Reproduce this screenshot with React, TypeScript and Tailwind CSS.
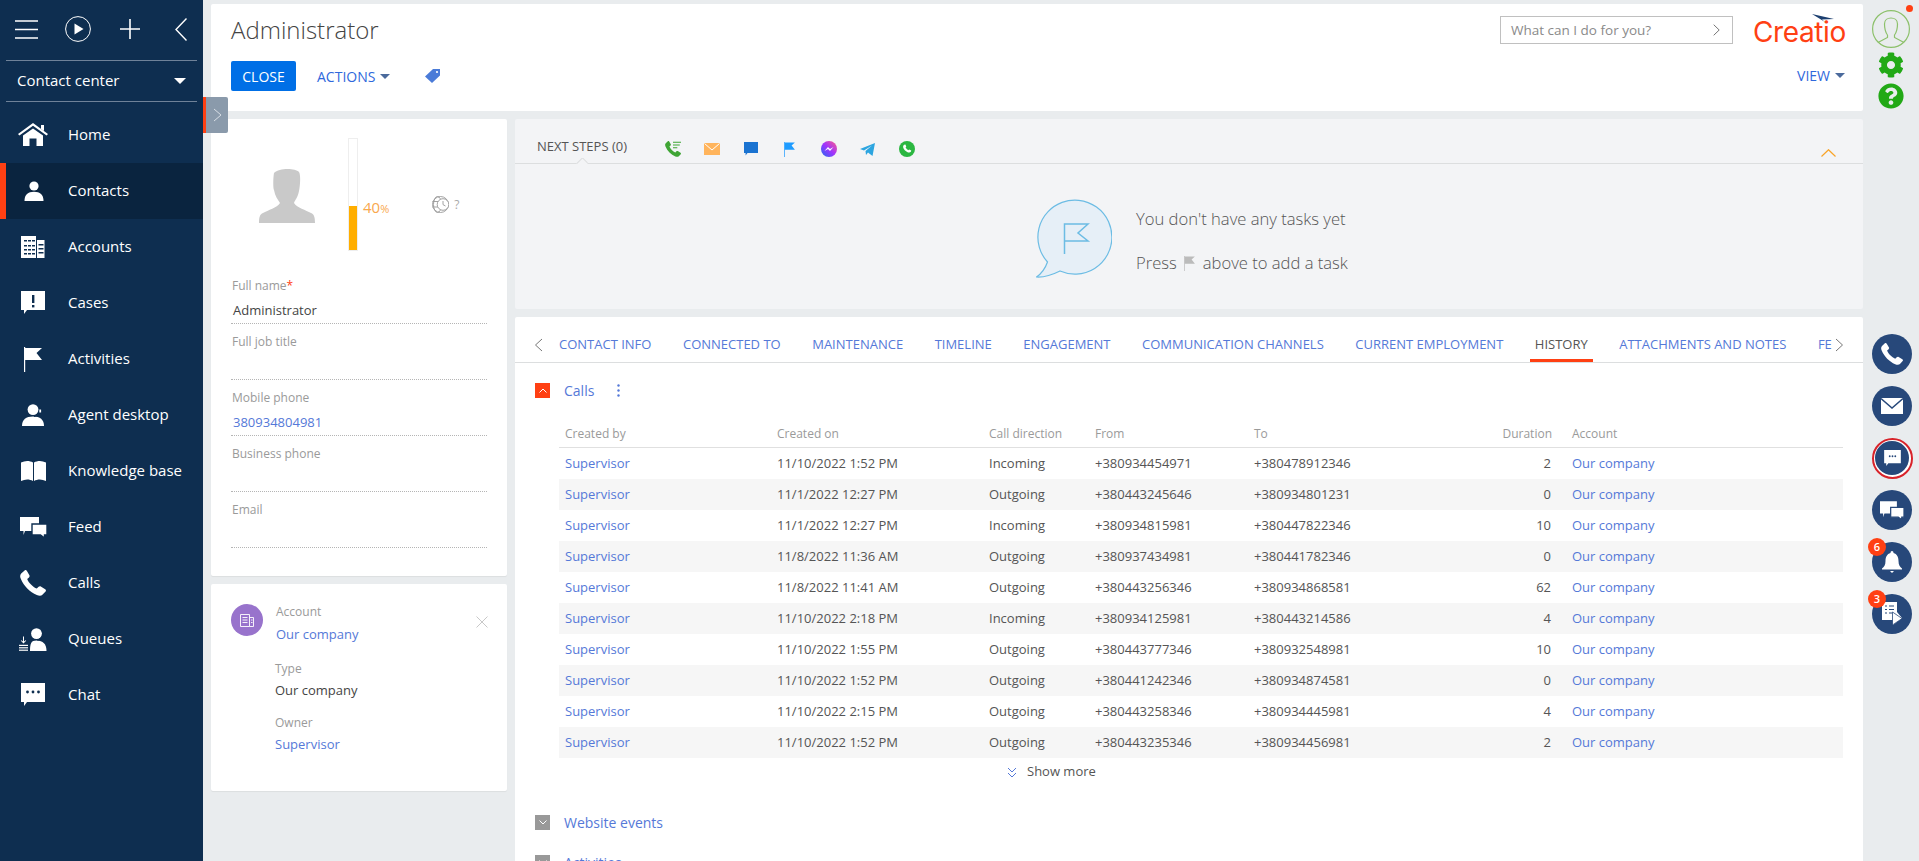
import React from 'react';
import { FaCog, FaQuestionCircle } from 'react-icons/fa';

const BLUE = 'text-[#5579d8]';

function Home() { return <svg width="30" height="24" viewBox="0 0 30 24" fill="#fff"><path d="M15 0 L30 11 L28.6 12.6 L15 2.8 L1.4 12.6 L0 11 Z"/><path d="M23 2 h3 v6 l-3 -2 z"/><path d="M5 12.5 L15 5.5 L25 12.5 V23 H18.5 V15.5 H11.5 V23 H5 Z"/></svg>; }
function Person() { return <svg width="20" height="20" viewBox="0 0 20 20" fill="#fff"><circle cx="10" cy="5" r="4.6"/><path d="M0.5 20 C0.5 13.5 4 10.8 10 10.8 C16 10.8 19.5 13.5 19.5 20 Z"/></svg>; }
function Accounts() { return <svg width="24" height="22" viewBox="0 0 24 22"><path fill="#fff" d="M0 0 H15 V22 H0 Z M16 4 H23.5 V22 H16 Z"/><g fill="#0e2e50"><rect x="3" y="4" width="3" height="1.5"/><rect x="7" y="4" width="3" height="1.5"/><rect x="11" y="4" width="3" height="1.5"/><rect x="3" y="9" width="3" height="1.5"/><rect x="7" y="9" width="3" height="1.5"/><rect x="11" y="9" width="3" height="1.5"/><rect x="3" y="13" width="3" height="1.5"/><rect x="7" y="13" width="3" height="1.5"/><rect x="11" y="13" width="3" height="1.5"/><rect x="3" y="17" width="3" height="1.5"/><rect x="7" y="17" width="3" height="1.5"/><rect x="11" y="17" width="3" height="1.5"/><rect x="17.5" y="8" width="5" height="1.5"/><rect x="17.5" y="12" width="5" height="1.5"/><rect x="17.5" y="16" width="5" height="1.5"/></g></svg>; }
function Cases() { return <svg width="24" height="24" viewBox="0 0 24 24"><path fill="#fff" d="M0 0 H24 V19 H6 L3 23 V19 H0 Z"/><rect x="11" y="4" width="2.4" height="8" fill="#0e2e50"/><rect x="11" y="14" width="2.4" height="2.4" fill="#0e2e50"/></svg>; }
function Flag({ c = '#fff', w = 18, h = 25 }: { c?: string; w?: number; h?: number }) { return <svg width={w} height={h} viewBox="0 0 18 25" fill={c}><rect x="0" y="0" width="1.2" height="25"/><path d="M1 1 H18 L12.5 6 L18 13 H1 Z"/></svg>; }
function Agent() { return <svg width="22" height="22" viewBox="0 0 22 22" fill="#fff"><circle cx="11" cy="5.6" r="5.4"/><path d="M0 22 C0 15.500 4 12.500 11 12.500 C18 12.500 22 15.500 22 22 Z"/><path d="M17.500 2.500 C20 6 19 10.500 12 12.500" stroke="#0e2e50" strokeWidth="1.2" fill="none"/><path d="M17.300 5.500 h1.800 v3 h-1.800 z" fill="#fff"/></svg>; }
function Book() { return <svg width="25" height="20" viewBox="0 0 25 20" fill="#fff"><path d="M0 1.5 C4 -0.5 8.5 -0.5 12 1.5 V20 C8.5 18 4 18 0 20 Z"/><path d="M25 1.5 C21 -0.5 16.5 -0.5 13 1.5 V20 C16.5 18 21 18 25 20 Z"/></svg>; }
function Feed() { return <svg width="27" height="21" viewBox="0 0 27 21"><path fill="#fff" d="M0 0 H19 V14 H5 L3.5 18 V14 H0 Z"/><path fill="#fff" stroke="#0e2e50" strokeWidth="1.4" d="M12 7 H27 V18 H24.5 V21 L20.5 18 H12 Z"/></svg>; }
function Phone({ s = 26, c = '#fff' }: { s?: number; c?: string }) { return <svg width={s} height={s} viewBox="0 0 26 26" fill={c}><path d="M1.2 3.6 L4.6 0.4 C5.4 -0.2 6.2 0 6.8 0.8 L9.4 5.2 C9.8 6 9.6 6.8 9 7.4 L7.2 9 C8.6 12.8 12.8 17 16.8 18.6 L18.6 16.8 C19.2 16.2 20 16 20.8 16.4 L25.2 19.2 C26 19.8 26.2 20.6 25.6 21.4 L22.4 24.8 C21.2 26 19 26 16.8 25 C9.8 22 3.8 16 0.8 8.8 C-0.2 6.8 0 4.8 1.2 3.6 Z"/></svg>; }
function Queues() { return <svg width="28" height="23" viewBox="0 0 28 23" fill="#fff"><circle cx="17.500" cy="5.600" r="5.400"/><path d="M11 23 C11 15.500 12 12.500 17.500 12.500 C24 12.500 27.500 16 27.500 23 Z"/><path d="M23 3 C25 6 24 10 18.500 12.500" stroke="#0e2e50" strokeWidth="1.2" fill="none"/><rect x="0" y="21.6" width="9" height="1.2"/><rect x="0" y="19.2" width="9" height="1.2"/><rect x="0" y="16.8" width="9" height="1.2"/><path d="M4 8.6 h1 v5 l1.6 -1.4 l.6 .6 L4.5 15.4 L1.8 12.8 l.6 -.6 L4 13.6 Z"/></svg>; }
function Chat() { return <svg width="24" height="24" viewBox="0 0 24 24"><path fill="#fff" d="M0 0 H24 V19 H6 L3 23 V19 H0 Z"/><circle cx="6.5" cy="9" r="1.4" fill="#0e2e50"/><circle cx="12" cy="9" r="1.4" fill="#0e2e50"/><circle cx="17.5" cy="9" r="1.4" fill="#0e2e50"/></svg>; }
function Caret({ c = '#fff', w = 10, h = 5 }: { c?: string; w?: number; h?: number }) { return <svg width={w} height={h} viewBox="0 0 10 5" fill={c}><path d="M0 0 H10 L5 5 Z"/></svg>; }

const menu: [string, React.ReactNode, boolean][] = [
  ['Home', <Home />, false],
  ['Contacts', <Person />, true],
  ['Accounts', <Accounts />, false],
  ['Cases', <Cases />, false],
  ['Activities', <Flag />, false],
  ['Agent desktop', <Agent />, false],
  ['Knowledge base', <Book />, false],
  ['Feed', <Feed />, false],
  ['Calls', <Phone />, false],
  ['Queues', <Queues />, false],
  ['Chat', <Chat />, false],
];

function Sidebar() {
  return (
    <aside className="w-[203px] shrink-0 h-full bg-[#0e2e50] text-white">
      <div className="h-[60px] flex items-center pl-[15px] pb-[2px]">
        <svg width="23" height="19" viewBox="0 0 23 19" stroke="#fff" strokeWidth="1.4"><path d="M0 1 H23 M0 9.500 H23 M0 18 H23"/></svg>
        <svg className="ml-[27px]" width="26" height="26" viewBox="0 0 26 26"><circle cx="13" cy="13" r="12.4" stroke="#fff" strokeWidth="1" fill="none"/><path d="M9.500 7.500 L18.500 13 L9.500 18.500 Z" fill="#fff"/></svg>
        <svg className="ml-[29px]" width="20" height="20" viewBox="0 0 20 20" stroke="#fff" strokeWidth="1.6"><path d="M10 0 V20 M0 10 H20"/></svg>
        <svg className="ml-[35px]" width="12" height="23" viewBox="0 0 12 23" stroke="#fff" strokeWidth="1.4" fill="none"><path d="M11.500 0.500 L1 11.500 L11.500 22.500"/></svg>
      </div>
      <div className="mx-[6px] h-[42px] border-y border-[#6f8299] flex items-center justify-between pl-[11px] pr-[11px] text-[15px]">
        <span className="-mt-[1px]">Contact center</span>
        <Caret w={12} h={6} />
      </div>
      <nav className="pt-[5px]">
        {menu.map(([label, icon, active]) => (
          <div key={label} className={`h-[56px] flex items-center text-[15px] ${active ? 'bg-[#0a243f] border-l-[6px] border-[#ff4013]' : ''}`}>
            <div className={`flex justify-center shrink-0 ${active ? 'w-[55px] mr-[7px]' : 'w-[68px] pr-[2px]'}`}>{icon}</div>
            <span className="-mt-[1px]">{label}</span>
          </div>
        ))}
      </nav>
    </aside>
  );
}

function Field({ label, value, req, link }: { label: string; value?: string; req?: boolean; link?: boolean }) {
  return (
    <div className="h-[56px] pt-[9px] border-b border-dotted border-[#b5b5b5]">
      <div className="text-[12px] leading-[18px] text-[#9a9a9a] pl-[1px]">{label}{req && <span className="text-[#ff4013]">*</span>}</div>
      <div className={`mt-[6px] pl-[2px] text-[13px] leading-[18px] ${link ? BLUE : 'text-[#444]'}`}>{value}</div>
    </div>
  );
}

function LeftColumn() {
  return (
    <div className="w-[296px] shrink-0 flex flex-col gap-[8px]">
      <div className="h-[457px] bg-white rounded-[2px] pl-[20px] pr-[20px] shadow-[0_1px_1px_rgba(0,0,0,0.06)]">
        <div className="h-[149px] flex">
          <div className="w-[118px] pt-[50px] pl-[28px]">
            <svg width="56" height="54" viewBox="0 0 56 54" fill="#c9c9c9"><path d="M15 4 C20 -1 36 -1 40 3 C42 6 41 18 40 22 C39 28 36 31 35 34 C38 39 47 41 52 44 C55 45 56 48 56 54 H0 C0 48 1 45 4 44 C9 41 18 39 21 34 C19 31 16 27 15 21 C14 20 14 9 15 4 Z"/></svg>
          </div>
          <div className="relative w-[8px] h-[111px] mt-[20px] bg-white outline outline-[#eee]">
            <div className="absolute bottom-0 left-0 w-full h-[44px] bg-[#ffae00]" />
          </div>
          <div className="ml-[6px] mt-[78px] text-[#f9a84d] text-[15px] leading-[20px] h-[20px]">40<span className="text-[11px]">%</span></div>
          <div className="ml-[43px] mt-[77px] h-[17px] flex items-center gap-[5px] text-[#aaa] text-[12px]">
            <svg width="17" height="17" viewBox="0 0 17 17" fill="none" stroke="#999" strokeWidth="0.9"><circle cx="8.5" cy="8.5" r="8"/><ellipse cx="5.5" cy="8.5" rx="4" ry="8"/><path d="M0.5 5.5 H11 M0.5 11 H11"/><circle cx="11" cy="8.5" r="5.8" fill="#fff"/><path d="M11 5 V8.6 L13.5 10"/></svg>
            <span>?</span>
          </div>
        </div>
        <Field label="Full name" value="Administrator" req />
        <Field label="Full job title" />
        <Field label="Mobile phone" value="380934804981" link />
        <Field label="Business phone" />
        <Field label="Email" />
      </div>
      <div className="h-[207px] bg-white rounded-[2px] relative flex pl-[20px] pt-[20px] shadow-[0_1px_1px_rgba(0,0,0,0.06)]">
        <div className="w-[32px] h-[32px] rounded-full bg-[#9873cc] flex items-center justify-center">
          <svg width="14" height="13" viewBox="0 0 14 13" fill="none" stroke="#fff" strokeWidth="0.9"><path d="M0.5 0.5 H9.5 V12.5 H0.5 Z M9.5 3.5 H13.5 V12.5 H9.5 M2.5 3.5 H7.5 M2.5 6 H7.5 M2.5 8.5 H7.5 M11 6 H12.5 M11 8.5 H12.5"/></svg>
        </div>
        <div className="ml-[12px] text-[12px] -mt-[1px]">
          <div className="pl-[1px] text-[#9a9a9a] leading-[18px]">Account</div>
          <div className={`pl-[1px] mt-[4px] text-[13px] leading-[18px] ${BLUE}`}>Our company</div>
          <div className="mt-[17px] text-[#9a9a9a] leading-[18px]">Type</div>
          <div className="mt-[3px] text-[13px] leading-[18px] text-[#444]">Our company</div>
          <div className="mt-[15px] text-[#9a9a9a] leading-[18px]">Owner</div>
          <div className={`mt-[3px] text-[13px] leading-[18px] ${BLUE}`}>Supervisor</div>
        </div>
        <svg className="absolute left-[265px] top-[32px]" width="12" height="12" viewBox="0 0 12 12" stroke="#c8c8c8" strokeWidth="1"><path d="M0.5 0.5 L11.5 11.5 M11.5 0.5 L0.5 11.5"/></svg>
      </div>
    </div>
  );
}

function IconCell({ children }: { children: React.ReactNode }) {
  return <div className="w-[39px] h-[16px] flex items-center justify-center">{children}</div>;
}

function NextSteps() {
  return (
    <div className="h-[190px] bg-[#f3f4f6] rounded-[2px] shrink-0 relative">
      <div className="h-[45px] border-b border-[#dcdedf] flex items-start pl-[22px] relative">
        <span className="text-[13px] text-[#555] leading-[18px] mt-[18px] w-[116px] shrink-0">NEXT STEPS (0)</span>
        <div className="flex items-center mt-[22px]">
          <IconCell><svg width="16" height="16" viewBox="0 0 26 26"><path fill="#3fa535" d="M1.2 3.6 L4.6 0.4 C5.4 -0.2 6.2 0 6.8 0.8 L9.4 5.2 C9.8 6 9.6 6.8 9 7.4 L7.2 9 C8.6 12.8 12.8 17 16.8 18.6 L18.6 16.8 C19.2 16.2 20 16 20.8 16.4 L25.2 19.2 C26 19.8 26.2 20.6 25.6 21.4 L22.4 24.8 C21.2 26 19 26 16.8 25 C9.8 22 3.8 16 0.8 8.8 C-0.2 6.8 0 4.8 1.2 3.6 Z"/><path stroke="#3fa535" strokeWidth="1.8" d="M13 2 H26 M13 6.500 H24 M13 11 H20"/></svg></IconCell>
          <IconCell><svg width="16" height="12" viewBox="0 0 16 12"><rect width="16" height="12" fill="#ffb45c"/><path d="M0.5 0.5 L8 7 L15.5 0.5" stroke="#fff" strokeWidth="1" fill="none"/></svg></IconCell>
          <IconCell><svg width="14" height="14" viewBox="0 0 14 14"><path fill="#1a73d1" d="M0 0 H14 V11 H3.5 L1.6 13.5 V11 H0 Z"/></svg></IconCell>
          <IconCell><Flag c="#1e9bff" w={11} h={15} /></IconCell>
          <IconCell><svg width="16" height="16" viewBox="0 0 16 16"><defs><linearGradient id="mg" x1="0" y1="1" x2="1" y2="0"><stop offset="0" stopColor="#1f6cf0"/><stop offset="0.5" stopColor="#a033ff"/><stop offset="1" stopColor="#ff5c87"/></linearGradient></defs><circle cx="8" cy="8" r="8" fill="url(#mg)"/><path d="M3.5 10 L7 6 L9 8 L12.5 6 L9 10 L7 8 Z" fill="#fff"/></svg></IconCell>
          <IconCell><svg width="15" height="13" viewBox="0 0 15 13"><path fill="#2ca5e0" d="M0 6 L15 0 L12.5 13 L8 9.5 L6 12 L5.5 8 L12 2.5 L4 7.5 Z"/></svg></IconCell>
          <IconCell><svg width="16" height="16" viewBox="0 0 16 16"><circle cx="8" cy="8" r="8" fill="#2bb741"/><path fill="#fff" d="M5.2 3.8 L6.4 3.6 L7.3 5.6 L6.6 6.6 C7.2 7.7 8.1 8.6 9.3 9.2 L10.2 8.4 L12.2 9.4 L12 10.6 C11.4 11.6 10 11.9 8.6 11.3 C6.4 10.4 4.8 8.6 4.2 6.6 C3.9 5.5 4.3 4.4 5.2 3.8 Z"/></svg></IconCell>
        </div>
        <div className="absolute left-[61px] bottom-[-1px] w-[12px] h-[6px] overflow-hidden">
          <div className="w-[9px] h-[9px] rotate-45 bg-[#f3f4f6] border-l border-t border-[#dcdedf] mx-auto mt-[1px]" />
        </div>
        <svg className="absolute right-[27px] top-[30px]" width="15" height="8" viewBox="0 0 15 8" stroke="#f9a428" strokeWidth="1.2" fill="none"><path d="M0.5 7.5 L7.5 0.7 L14.5 7.5"/></svg>
      </div>
      <div className="flex items-start pl-[521px] pt-[34px]">
        <svg className="shrink-0" width="76" height="80" viewBox="0 0 76 80" fill="#e6eff7" stroke="#6cbce4" strokeWidth="1.2"><path d="M11.500 64 C9 71 5 76 0.500 79 C8 79.500 16 77 24 73 A37 37 0 1 0 11.500 64 Z"/><path d="M28.500 56 V26 H52 L42 35 L52 43 H28.500" fill="none" strokeWidth="1.5"/></svg>
        <div className="ml-[24px] text-[16.6px] text-[#555] font-light">
          <div className="mt-[9px] leading-[24px]">You don&apos;t have any tasks yet</div>
          <div className="mt-[20px] leading-[24px] flex items-center">Press <span className="ml-[7px] mr-[8px]"><Flag c="#bbb" w={11} h={15} /></span> above to add a task</div>
        </div>
      </div>
    </div>
  );
}

const rows = [
  ['11/10/2022 1:52 PM', 'Incoming', '+380934454971', '+380478912346', '2'],
  ['11/1/2022 12:27 PM', 'Outgoing', '+380443245646', '+380934801231', '0'],
  ['11/1/2022 12:27 PM', 'Incoming', '+380934815981', '+380447822346', '10'],
  ['11/8/2022 11:36 AM', 'Outgoing', '+380937434981', '+380441782346', '0'],
  ['11/8/2022 11:41 AM', 'Outgoing', '+380443256346', '+380934868581', '62'],
  ['11/10/2022 2:18 PM', 'Incoming', '+380934125981', '+380443214586', '4'],
  ['11/10/2022 1:55 PM', 'Outgoing', '+380443777346', '+380932548981', '10'],
  ['11/10/2022 1:52 PM', 'Outgoing', '+380441242346', '+380934874581', '0'],
  ['11/10/2022 2:15 PM', 'Outgoing', '+380443258346', '+380934445981', '4'],
  ['11/10/2022 1:52 PM', 'Outgoing', '+380443235346', '+380934456981', '2'],
];
const cols = 'grid grid-cols-[212px_212px_106px_159px_297px_21px_1fr]';

function SectionHead({ label, open }: { label: string; open?: boolean }) {
  return (
    <div className="flex items-center h-[15px]">
      <div className={`w-[15px] h-[15px] flex items-center justify-center ${open ? 'bg-[#ff4013]' : 'bg-[#999]'}`}>
        <svg width="8" height="5" viewBox="0 0 8 5" stroke="#fff" strokeWidth="1" fill="none">{open ? <path d="M0.5 4.5 L4 1 L7.5 4.5"/> : <path d="M0.5 0.5 L4 4 L7.5 0.5"/>}</svg>
      </div>
      <span className={`ml-[14px] text-[14px] ${BLUE}`}>{label}</span>
    </div>
  );
}

function TabsCard() {
  const tabs = ['CONTACT INFO', 'CONNECTED TO', 'MAINTENANCE', 'TIMELINE', 'ENGAGEMENT', 'COMMUNICATION CHANNELS', 'CURRENT EMPLOYMENT', 'HISTORY', 'ATTACHMENTS AND NOTES', 'FEED'];
  return (
    <div className="flex-1 min-h-0 bg-white rounded-t-[2px] overflow-hidden">
      <div className="h-[46px] border-b border-[#dcdedf] flex items-center relative pl-[19px]">
        <svg className="shrink-0 mt-[10px]" width="9" height="14" viewBox="0 0 9 14" stroke="#777" strokeWidth="1" fill="none"><path d="M8 1 L1.5 7 L8 13"/></svg>
        <div className="flex-1 min-w-0 overflow-hidden flex h-full ml-[11px] mr-[31px]">
          {tabs.map(t => (
            <div key={t} className={`shrink-0 h-full px-[5px] mr-[21.5px] flex items-center text-[13px] whitespace-nowrap border-b-[3px] pt-[14px] ${t === 'HISTORY' ? 'text-[#555] border-[#ff4013]' : `border-transparent ${BLUE}`}`}>{t}</div>
          ))}
        </div>
        <svg className="absolute right-[19px] top-[21px]" width="9" height="14" viewBox="0 0 9 14" stroke="#777" strokeWidth="1" fill="none"><path d="M1 1 L7.5 7 L1 13"/></svg>
      </div>
      <div className="pl-[20px] pr-[20px] pt-[20px]">
        <div className="flex items-center">
          <SectionHead label="Calls" open />
          <svg className="ml-[23px]" width="3" height="13" viewBox="0 0 3 13" fill="#5579d8"><circle cx="1.5" cy="1.5" r="1.2"/><circle cx="1.5" cy="6.5" r="1.2"/><circle cx="1.5" cy="11.5" r="1.2"/></svg>
        </div>
        <div className="ml-[24px] mt-[27px]">
          <div className={`${cols} h-[23px] border-b border-[#e0e0e0] text-[12px] text-[#9a9a9a] leading-[18px] pl-[6px]`}>
            <span>Created by</span><span>Created on</span><span>Call direction</span><span>From</span><span>To</span>
            <span className="-ml-[20px] w-[21px] flex justify-end"><span className="shrink-0">Duration</span></span>
            <span>Account</span>
          </div>
          {rows.map((r, i) => (
            <div key={i} className={`${cols} h-[31px] items-center text-[13px] pl-[6px] text-[#555] ${i % 2 ? 'bg-[#f6f6f6]' : ''}`}>
              <span className={BLUE}>Supervisor</span>
              <span>{r[0]}</span><span>{r[1]}</span><span>{r[2]}</span><span>{r[3]}</span>
              <span className="-ml-[21px] w-[21px] text-right">{r[4]}</span>
              <span className={BLUE}>Our company</span>
            </div>
          ))}
          <div className="h-[28px] flex items-center pl-[448px] text-[13px] text-[#555]">
            <svg width="10" height="11" viewBox="0 0 10 11" stroke="#5579d8" strokeWidth="1" fill="none"><path d="M1 1 L5 5 L9 1 M1 6 L5 10 L9 6"/></svg>
            <span className="ml-[10px]">Show more</span>
          </div>
        </div>
        <div className="mt-[29px]"><SectionHead label="Website events" /></div>
        <div className="mt-[25px]"><SectionHead label="Activities" /></div>
      </div>
    </div>
  );
}

function Header() {
  return (
    <div className="h-[107px] bg-white rounded-[2px] flex justify-between pl-[20px] pr-[18px] shrink-0">
      <div>
        <div className="mt-[9px] text-[24px] leading-[34px] font-light text-[#444]">Administrator</div>
        <div className="mt-[14px] flex items-center">
          <div className="w-[65px] h-[30px] bg-[#006fe6] rounded-[2px] text-white text-[14px] flex items-center justify-center">CLOSE</div>
          <div className="ml-[21px] flex items-center gap-[5px] text-[14px] text-[#2f68dc]">ACTIONS <Caret c="#4b6a9c" /></div>
          <svg className="ml-[35px]" width="15" height="14" viewBox="0 0 15 14" fill="#4a7bd8"><path d="M8 0 H15 V6.5 L7 14 L0 7.5 Z"/><circle cx="12" cy="3" r="1.1" fill="#fff"/></svg>
        </div>
      </div>
      <div className="flex flex-col items-end">
        <div className="flex items-start mt-[10px]">
          <div className="w-[233px] h-[28px] mt-[2px] border border-[#c0c0c0] flex items-center justify-between pl-[10px] pr-[12px] text-[13.5px] text-[#8a8a8a]">
            <span>What can I do for you?</span>
            <svg width="7" height="12" viewBox="0 0 7 12" stroke="#777" strokeWidth="1" fill="none"><path d="M0.7 0.7 L6.2 6 L0.7 11.3"/></svg>
          </div>
          <div className="relative w-[92px] ml-[20px] h-[32px]">
            <span className="block text-[#ff4013] text-[28px] leading-[32px] tracking-[-0.4px] mt-[2px] font-['Inter',sans-serif]">Creatio</span>
            <svg className="absolute left-[59px] top-[0px]" width="22" height="8" viewBox="0 0 22 8" fill="#1c3f70"><path d="M0 0 L22 5 L10 5.4 L13 8 Z"/></svg>
          </div>
        </div>
        <div className="mt-[19px] flex items-center gap-[5px] text-[14px] text-[#2f68dc]">VIEW <Caret c="#4b6a9c" /></div>
      </div>
    </div>
  );
}

function RailButton({ children, badge, ring }: { children: React.ReactNode; badge?: string; ring?: boolean }) {
  if (ring) {
    return (
      <div className="w-[41px] h-[41px] -m-[0.5px] rounded-full border-2 border-[#d8232a] bg-white flex items-center justify-center">
        <div className="w-[34px] h-[34px] rounded-full bg-[#27487a] flex items-center justify-center">{children}</div>
      </div>
    );
  }
  return (
    <div className="relative w-[40px] h-[40px] rounded-full bg-[#27487a] flex items-center justify-center">
      {children}
      {badge && <div className="absolute -left-[4px] -top-[4px] w-[18px] h-[18px] rounded-full bg-[#ff4013] text-white text-[11px] font-semibold flex items-center justify-center">{badge}</div>}
    </div>
  );
}

function Rail() {
  return (
    <div className="w-[56px] shrink-0 h-full flex flex-col items-center pt-[10px]">
      <div className="relative w-[38px] h-[38px]">
        <svg width="38" height="38" viewBox="0 0 38 38" fill="none" stroke="#8cc06a" strokeWidth="1.2"><circle cx="19" cy="19" r="18.4"/><path d="M12.500 14 C12.500 6 25.500 6 25.500 14 C25.500 19 24 23 22.500 25 V27.500 L32 32.500 M15.500 25 V27.500 L6 32.500 M12.500 14 C12.500 19 14 23 15.500 25"/></svg>
        <div className="absolute right-[-3px] -top-[5px] w-[7px] h-[7px] rounded-full bg-[#ff4013]" />
      </div>
      <FaCog className="mt-[4px] text-[#22a916]" size={26} />
      <FaQuestionCircle className="mt-[5px] text-[#22a916]" size={26} />
      <div className="mt-[225px] flex flex-col gap-[12px] ml-[2px]">
        <RailButton><Phone s={22} /></RailButton>
        <RailButton><svg width="22" height="16" viewBox="0 0 22 16"><rect width="22" height="16" fill="#fff"/><path d="M0 0.5 L11 10 L22 0.5" stroke="#27487a" strokeWidth="1.4" fill="none"/></svg></RailButton>
        <RailButton ring><svg width="17" height="16" viewBox="0 0 24 23"><path fill="#fff" d="M0 0 H24 V19 H6 L3 23 V19 H0 Z"/><circle cx="8" cy="9" r="1.300" fill="#27487a"/><circle cx="12" cy="9" r="1.300" fill="#27487a"/><circle cx="16" cy="9" r="1.300" fill="#27487a"/></svg></RailButton>
        <RailButton><svg width="24" height="19" viewBox="0 0 27 21"><path fill="#fff" d="M0 0 H19 V14 H5 L3.500 18 V14 H0 Z"/><path fill="#fff" stroke="#27487a" strokeWidth="1.400" d="M12 7 H27 V18 H24.500 V21 L20.500 18 H12 Z"/></svg></RailButton>
        <RailButton badge="6"><svg width="20" height="22" viewBox="0 0 20 22" fill="#fff"><path d="M10 0 C11 0 11.500 .8 11.500 2 C15 3 16.500 6 16.500 10 C16.500 14 18 16 20 17.500 V18.500 H0 V17.500 C2 16 3.500 14 3.500 10 C3.500 6 5 3 8.500 2 C8.500 .8 9 0 10 0 Z"/><path d="M8 20 H12 L10 22 Z"/></svg></RailButton>
        <RailButton badge="3"><svg width="20" height="24" viewBox="0 0 20 24"><path fill="#fff" d="M0 0 H15 V10 L20 16 L11 23 V18 H0 Z"/><path stroke="#27487a" strokeWidth="1.200" d="M3 4 H5 M7 4 H12 M3 7.500 H5 M7 7.500 H12 M3 11 H5 M7 11 H10"/><path d="M10.500 10 L20 16.500 L10.500 23 Z" fill="#fff" stroke="#27487a" strokeWidth="0.8"/></svg></RailButton>
      </div>
    </div>
  );
}

export default function App() {
  return (
    <div className="relative h-screen w-full flex overflow-hidden bg-[#e9ecee] font-['Open_Sans',sans-serif]">
      <Sidebar />
      <main className="flex-1 min-w-0 h-full pl-[8px] pt-[4px] flex flex-col gap-[8px]">
        <Header />
        <div className="flex-1 min-h-0 flex gap-[8px]">
          <LeftColumn />
          <div className="flex-1 min-w-0 flex flex-col gap-[8px]">
            <NextSteps />
            <TabsCard />
          </div>
        </div>
      </main>
      <Rail />
      <div className="absolute left-[203px] top-[97px] w-[25px] h-[36px] bg-[#8a9aab] border-l-[3px] border-[#ff4013] rounded-r-[2px] flex items-center justify-center">
        <svg width="9" height="14" viewBox="0 0 9 14" stroke="#d8dee5" strokeWidth="1" fill="none"><path d="M1 1 L8 7 L1 13"/></svg>
      </div>
    </div>
  );
}
